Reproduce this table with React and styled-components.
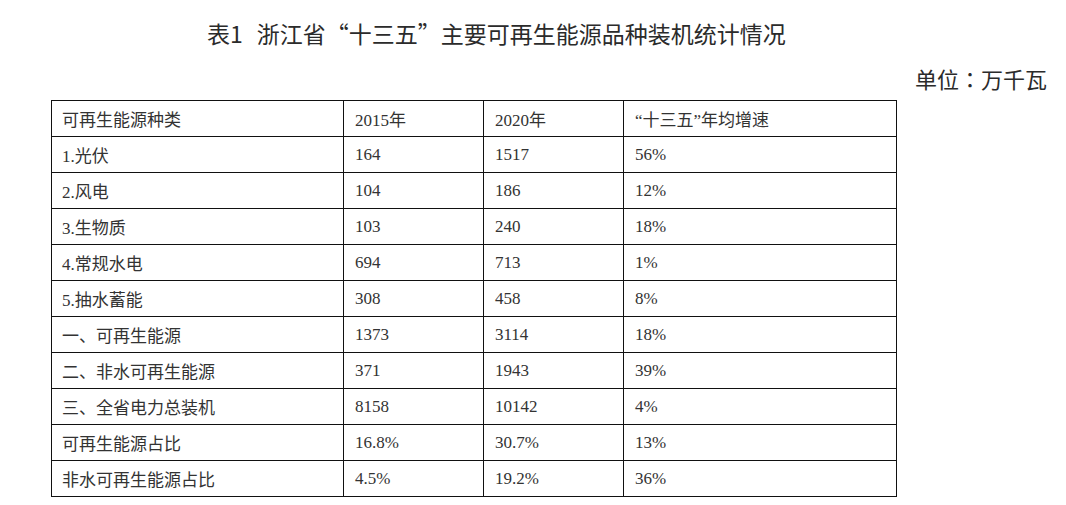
import React from 'react';
import styled, { createGlobalStyle } from 'styled-components';

const GlobalStyle = createGlobalStyle`
  html, body {
    margin: 0;
    padding: 0;
    background: #fff;
  }
`;

const Page = styled.section`
  width: 1066px;
  padding-top: 18px;
  font-family: "Noto Sans CJK SC", "Noto Sans", sans-serif;
  color: #333;
`;

const Title = styled.h1`
  margin: 0;
  padding-left: 207px;
  font-size: 23px;
  line-height: 30px;
  font-weight: normal;
  color: #2b2b2b;
  white-space: nowrap;
`;

const Gap = styled.span`
  display: inline-block;
  width: 14px;
`;

const Unit = styled.div`
  margin-top: 15px;
  padding-right: 19px;
  text-align: right;
  font-size: 22px;
  line-height: 30px;
  color: #2b2b2b;
`;

// 全角冒号居中显示
const Colon = styled.span`
  font-family: "Noto Sans CJK TC", "Noto Sans CJK SC", sans-serif;
`;

const Table = styled.table`
  margin: 7px 0 0 51px;
  width: 845px;
  border-collapse: collapse;
  table-layout: fixed;
  font-family: "Liberation Serif", "Noto Sans CJK SC", serif;
  font-size: 17px;
  color: #333;
`;

const Cell = styled.td`
  height: 35px;
  padding: 0 0 0 ${(p) => (p.$first ? 10 : 11)}px;
  border: 1px solid #111;
  vertical-align: middle;
  white-space: nowrap;
`;

const columns = [292, 140, 140, 273];

const rows = [
  ['可再生能源种类', '2015年', '2020年', '“十三五”年均增速'],
  ['1.光伏', '164', '1517', '56%'],
  ['2.风电', '104', '186', '12%'],
  ['3.生物质', '103', '240', '18%'],
  ['4.常规水电', '694', '713', '1%'],
  ['5.抽水蓄能', '308', '458', '8%'],
  ['一、可再生能源', '1373', '3114', '18%'],
  ['二、非水可再生能源', '371', '1943', '39%'],
  ['三、全省电力总装机', '8158', '10142', '4%'],
  ['可再生能源占比', '16.8%', '30.7%', '13%'],
  ['非水可再生能源占比', '4.5%', '19.2%', '36%'],
];

export default function App() {
  return (
    <Page>
      <GlobalStyle />
      <Title>表1<Gap />浙江省“十三五”主要可再生能源品种装机统计情况</Title>
      <Unit>单位<Colon>：</Colon>万千瓦</Unit>
      <Table>
        <colgroup>
          {columns.map((w, i) => (
            <col key={i} style={{ width: w }} />
          ))}
        </colgroup>
        <tbody>
          {rows.map((row, r) => (
            <tr key={r}>
              {row.map((text, c) => (
                <Cell key={c} $first={c === 0}>{text}</Cell>
              ))}
            </tr>
          ))}
        </tbody>
      </Table>
    </Page>
  );
}
